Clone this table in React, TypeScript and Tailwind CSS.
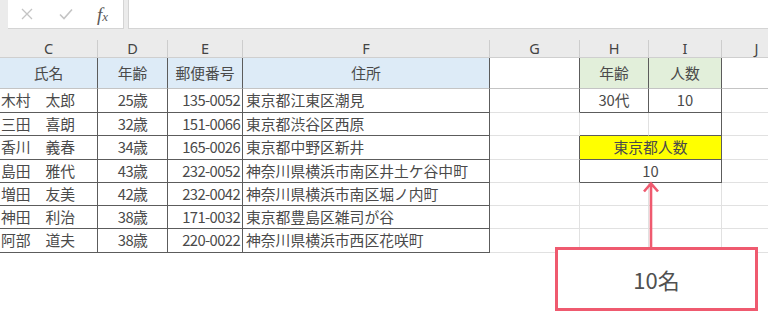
import type { ReactNode } from 'react';

const DARK = 'border-[#5c5c5c]';

const people = [
  ['木村　太郎', '25歳', '135-0052', '東京都江東区潮見'],
  ['三田　喜朗', '32歳', '151-0066', '東京都渋谷区西原'],
  ['香川　義春', '34歳', '165-0026', '東京都中野区新井'],
  ['島田　雅代', '43歳', '232-0052', '神奈川県横浜市南区井土ケ谷中町'],
  ['増田　友美', '42歳', '232-0042', '神奈川県横浜市南区堀ノ内町'],
  ['神田　利治', '38歳', '171-0032', '東京都豊島区雑司が谷'],
  ['阿部　道夫', '38歳', '220-0022', '神奈川県横浜市西区花咲町'],
];

const rowHeights = ['h-[24px]', 'h-[23px]', 'h-[24px]', 'h-[23px]', 'h-[23px]', 'h-[23px]', 'h-[24px]'];

const Cell = ({ children, className = '' }: { children?: ReactNode; className?: string }) => (
  <div className={`flex items-center overflow-hidden whitespace-nowrap border-r border-b ${className}`}>
    {children}
  </div>
);

const cols = 'grid grid-cols-[98px_70px_75px_247px_90px_69px_73px_70px]';

function RightCells({ i }: { i: number }) {
  const gDark = i === 1 || i === 3 || i === 4;
  const g = <Cell className={`border-b-[#e1e1e1] ${gDark ? 'border-r-[#5c5c5c]' : 'border-r-[#e1e1e1]'}`} />;
  const j = <Cell className="border-r-[#e1e1e1] border-b-[#e1e1e1]" />;

  if (i === 1) {
    return (
      <>
        {g}
        <Cell className={`${DARK} justify-center`}>30代</Cell>
        <Cell className={`${DARK} justify-center`}>10</Cell>
        {j}
      </>
    );
  }
  if (i === 2) {
    return (
      <>
        {g}
        <Cell className="border-r-[#e1e1e1] border-b-[#5c5c5c]" />
        <Cell className="border-r-[#5c5c5c] border-b-[#5c5c5c]" />
        {j}
      </>
    );
  }
  if (i === 3) {
    return (
      <>
        {g}
        <Cell className={`${DARK} col-span-2 justify-center bg-[#ffff00]`}>東京都人数</Cell>
        {j}
      </>
    );
  }
  if (i === 4) {
    return (
      <>
        {g}
        <Cell className={`${DARK} col-span-2 justify-center`}>10</Cell>
        {j}
      </>
    );
  }
  return (
    <>
      {g}
      <Cell className="border-r-[#e1e1e1] border-b-[#e1e1e1]" />
      <Cell className="border-r-[#e1e1e1] border-b-[#e1e1e1]" />
      {j}
    </>
  );
}

export default function App() {
  return (
    <div className="relative w-[768px] h-[312px] overflow-hidden bg-white text-[14.8px] text-[#4a4a4a] font-['Noto_Sans_CJK_JP',sans-serif]">
      {/* formula bar */}
      <div className="flex h-[38px] bg-[#ebebeb]">
        <div className="ml-2 flex h-[29px] w-[116px] items-center bg-white border-r border-b border-[#d4d4d4]">
          <svg width="12" height="12" viewBox="0 0 12 12" className="ml-[13px]">
            <path d="M1 1 L11 11 M11 1 L1 11" stroke="#c4c4c4" strokeWidth="1.3" fill="none" />
          </svg>
          <svg width="14" height="12" viewBox="0 0 14 12" className="ml-[26px]">
            <path d="M1 6.5 L5 10.5 L13 1.5" stroke="#c4c4c4" strokeWidth="1.6" fill="none" />
          </svg>
          <span className="ml-[24px] font-['Liberation_Serif',serif] italic text-[19px] text-[#5a5a5a] leading-none">
            f<span className="text-[13px]">x</span>
          </span>
        </div>
        <div className="ml-1 h-[29px] flex-1 bg-white border-l border-b border-[#d4d4d4]" />
      </div>

      {/* column letters */}
      <div className={`${cols} h-[20px] bg-[#ebebeb] border-b border-[#cfcfcf] font-['Noto_Sans',sans-serif] text-[14.5px] text-[#444]`}>
        {['C', 'D', 'E', 'F', 'G', 'H', 'I', 'J'].map((c) => (
          <div key={c} className="flex items-center justify-center border-r border-[#cdcdcd] mt-[2px] leading-none">
            {c}
          </div>
        ))}
      </div>

      {/* sheet */}
      <div className={`${cols} h-[31px]`}>
        {['氏名', '年齢', '郵便番号', '住所'].map((h) => (
          <Cell key={h} className="justify-center bg-[#ddebf7] border-r-[#5c5c5c] border-b-[#c4c4c4]">
            {h}
          </Cell>
        ))}
        <Cell className="border-r-[#5c5c5c] border-b-[#c4c4c4]" />
        <Cell className="justify-center bg-[#e2efda] border-r-[#5c5c5c] border-b-[#c4c4c4]">年齢</Cell>
        <Cell className="justify-center bg-[#e2efda] border-r-[#5c5c5c] border-b-[#c4c4c4]">人数</Cell>
        <Cell className="border-r-[#e1e1e1] border-b-[#c4c4c4]" />
      </div>

      {people.map((p, idx) => (
        <div key={p[0]} className={`${cols} ${rowHeights[idx]}`}>
          <Cell className={`${DARK} pl-px`}>{p[0]}</Cell>
          <Cell className={`${DARK} justify-center tracking-[-0.6px]`}>{p[1]}</Cell>
          <Cell className={`${DARK} justify-end pr-[2px] tracking-[-0.6px]`}>{p[2]}</Cell>
          <Cell className={`${DARK} pl-[3px]`}>{p[3]}</Cell>
          <RightCells i={idx + 1} />
        </div>
      ))}

      {/* callout */}
      <svg width="24" height="70" viewBox="0 0 24 70" className="absolute left-[640px] top-[180px]">
        <path d="M11 3 L11 68 M4 11.5 L11 3.5 L18 11.5" stroke="#ef5a6f" strokeWidth="2.6" fill="none" />
      </svg>
      <div className="absolute left-[555px] top-[247px] flex h-[64px] w-[203px] items-center justify-center border-[3px] border-[#ef5a6f] bg-white text-[22px] text-[#505050]">
        10名
      </div>
    </div>
  );
}
